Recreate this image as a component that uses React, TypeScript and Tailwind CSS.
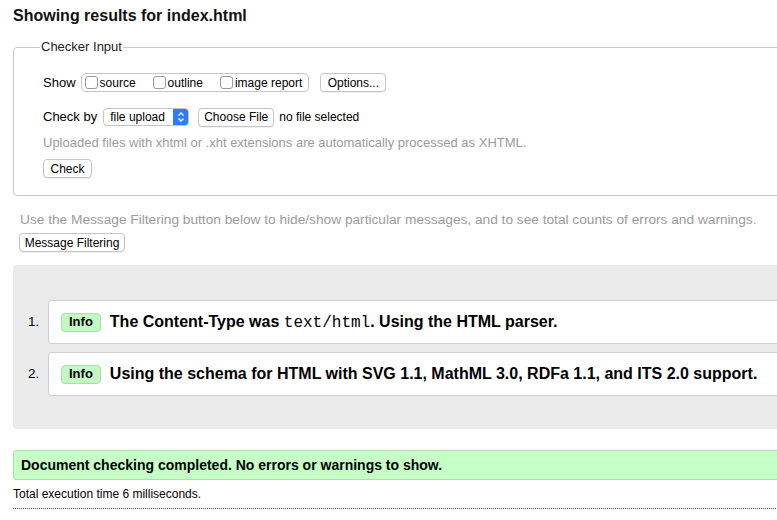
import React from "react";

const font = { fontFamily: '"Liberation Sans", Arial, sans-serif' };

const Btn = ({ children, className = "" }: { children: React.ReactNode; className?: string }) => (
  <span
    className={`inline-flex items-center justify-center whitespace-nowrap h-[19px] rounded-[4px] border border-[#c4c4c4] bg-white text-[12px] text-black shadow-[0_1px_0_rgba(0,0,0,0.05)] ${className}`}
  >
    {children}
  </span>
);

const Box = ({ label }: { label: string }) => (
  <label className="flex items-center gap-[2px]">
    <span className="w-[13px] h-[13px] rounded-[3px] border border-[#9a9a9a] bg-white" />
    <span className="text-[12px] text-black">{label}</span>
  </label>
);

const Message = ({ n, children }: { n: number; children: React.ReactNode }) => (
  <li className="flex items-center">
    <span className="w-[35px] pl-[15px] text-[13.5px] text-black">{n}.</span>
    <div className="flex-1 flex items-center h-[44px] pl-[12px] bg-white border border-[#cfcfcf] rounded-l-[3px]">
      <span className="inline-flex items-center h-[19px] px-[7px] mr-[9px] rounded-[4px] bg-[#c4f7c4] border border-[#a8dea8] text-[13px] font-bold text-black">
        Info
      </span>
      <span className="text-[16px] font-bold text-black whitespace-nowrap">{children}</span>
    </div>
  </li>
);

export default function App() {
  return (
    <div className="w-[777px] h-[520px] overflow-hidden bg-white" style={font}>
      <div className="w-[800px] pl-[13px]">
        <h2 className="pt-[6px] text-[16px] leading-[20px] font-bold text-[#111]">Showing results for index.html</h2>

        <fieldset className="mt-[13px] border border-[#c8c8c8] rounded-[4px]">
          <legend className="ml-[26px] px-[1px] text-[13px] leading-[16px] text-[#222]">Checker Input</legend>

          <div className="pl-[29px] pt-[18px] pb-[17px]">
            <div className="flex items-center h-[19px]">
              <span className="text-[13px] text-black mr-[5px]">Show</span>
              <div className="flex items-center gap-[17px] h-[19px] pl-[3px] pr-[6px] rounded-[5px] border border-[#c4c4c4]">
                <Box label="source" />
                <Box label="outline" />
                <Box label="image report" />
              </div>
              <Btn className="ml-[11px] w-[66px]">Options...</Btn>
            </div>

            <div className="flex items-center h-[18px] mt-[16px]">
              <span className="text-[13px] text-black mr-[6px]">Check by</span>
              <span className="flex items-center h-[18px] w-[86px] rounded-[4px] border border-[#c4c4c4] bg-white overflow-hidden">
                <span className="flex-1 pl-[6px] text-[12px] text-black">file upload</span>
                <span className="flex items-center justify-center w-[15px] h-full bg-[#2f7cf6]">
                  <svg width="8" height="12" viewBox="0 0 8 12" fill="none" stroke="white" strokeWidth="1.3">
                    <path d="M1.5 4.5 L4 2 L6.5 4.5" />
                    <path d="M1.5 7.5 L4 10 L6.5 7.5" />
                  </svg>
                </span>
              </span>
              <Btn className="ml-[9px] h-[18px] w-[76px]">Choose File</Btn>
              <span className="ml-[5px] text-[12px] text-black">no file selected</span>
            </div>

            <p className="mt-[9px] text-[13px] leading-[16px] text-[#9b9b9b]">
              Uploaded files with xhtml or .xht extensions are automatically processed as XHTML.
            </p>

            <div className="mt-[8px] flex">
              <Btn className="h-[19px] w-[49px]">Check</Btn>
            </div>
          </div>
        </fieldset>

        <p className="mt-[16px] pl-[7px] text-[13.7px] leading-[16px] text-[#9b9b9b] whitespace-nowrap">
          Use the Message Filtering button below to hide/show particular messages, and to see total counts of errors and warnings.
        </p>
        <div className="mt-[5px] pl-[6px] flex">
          <Btn className="w-[106px]">Message Filtering</Btn>
        </div>

        <ol className="mt-[13px] bg-[#ebebeb] rounded-l-[4px] pt-[35px] pb-[33px] flex flex-col gap-[8px]">
          <Message n={1}>
            The Content-Type was{" "}
            <code className="font-normal text-[16px]" style={{ fontFamily: '"Liberation Mono", "Courier New", monospace' }}>
              text/html
            </code>
            . Using the HTML parser.
          </Message>
          <Message n={2}>Using the schema for HTML with SVG 1.1, MathML 3.0, RDFa 1.1, and ITS 2.0 support.</Message>
        </ol>

        <div className="mt-[21px] h-[30px] flex items-center pl-[7px] bg-[#c6ffc6] border border-[#b0dcb0] rounded-l-[3px]">
          <span className="text-[14px] font-bold text-black">Document checking completed. No errors or warnings to show.</span>
        </div>
        <p className="mt-[7px] text-[12px] leading-[15px] text-black">Total execution time 6 milliseconds.</p>
        <div className="mt-[6px] border-t border-dotted border-[#555]" />
      </div>
    </div>
  );
}
